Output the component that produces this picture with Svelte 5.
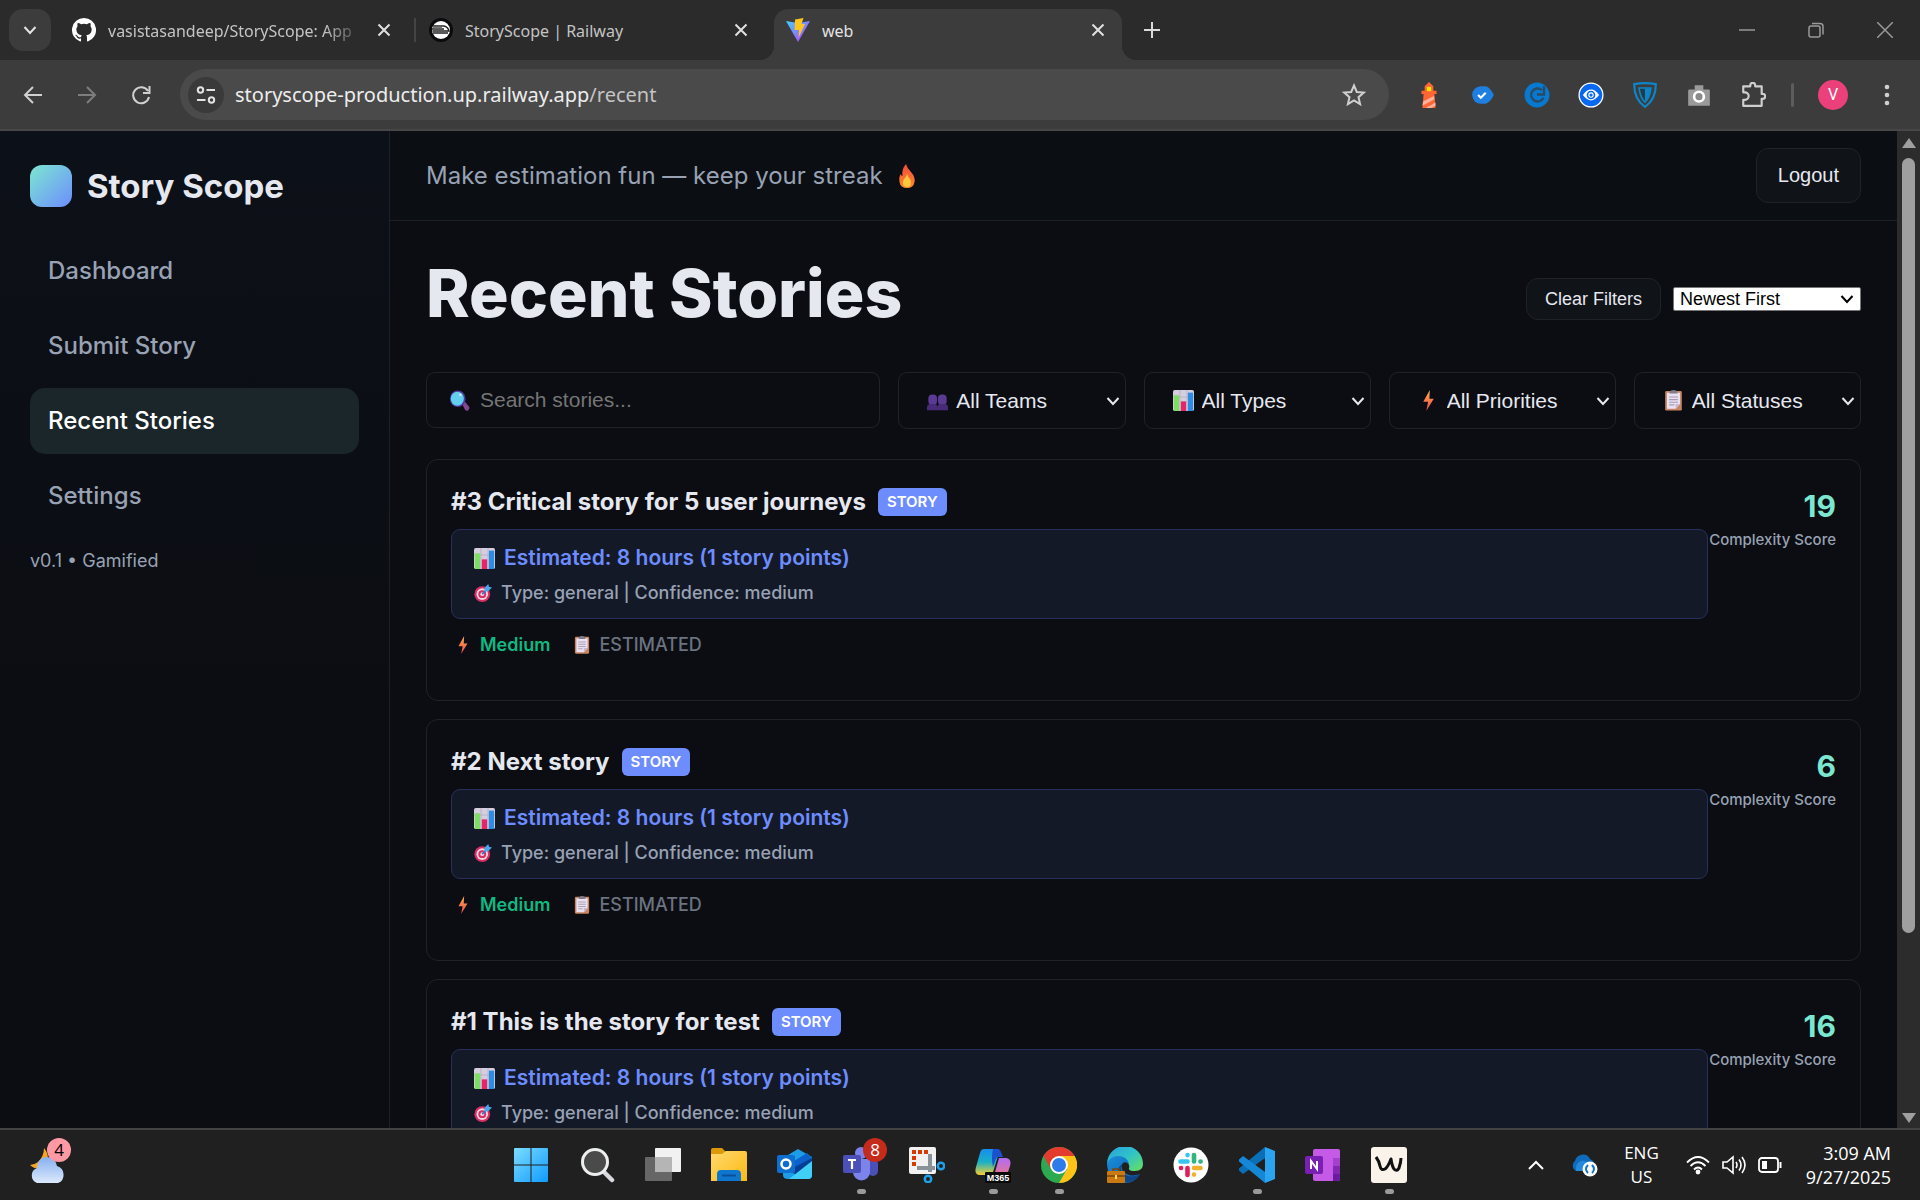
<script>
  const nav = ['Dashboard', 'Submit Story', 'Recent Stories', 'Settings'];
  const filters = [
    { icon: 'people', label: 'All Teams', name: 'Team' },
    { icon: 'chart', label: 'All Types', name: 'Type' },
    { icon: 'bolt', label: 'All Priorities', name: 'Priority' },
    { icon: 'clipboard', label: 'All Statuses', name: 'Status' }
  ];
  const stories = [
    { id: 3, title: 'Critical story for 5 user journeys', score: 19 },
    { id: 2, title: 'Next story', score: 6 },
    { id: 1, title: 'This is the story for test', score: 16 }
  ];
  const extensions = ['lighthouse', 'tag', 'grammar', 'eye', 'shield', 'camera', 'puzzle'];
  const apps = [
    { id: 'start', label: 'Start' },
    { id: 'find', label: 'Search' },
    { id: 'tasks', label: 'Task View' },
    { id: 'folder', label: 'File Explorer' },
    { id: 'outlook', label: 'Outlook' },
    { id: 'teams', label: 'Teams', open: true, badge: '8' },
    { id: 'snip', label: 'Snipping Tool' },
    { id: 'copilot', label: 'Microsoft 365 Copilot', open: true },
    { id: 'chrome', label: 'Chrome', open: true },
    { id: 'edge', label: 'Edge' },
    { id: 'slack', label: 'Slack' },
    { id: 'code', label: 'Visual Studio Code', open: true },
    { id: 'onenote', label: 'OneNote' },
    { id: 'wave', label: 'W', open: true }
  ];
</script>

{#snippet closeIcon()}
  <svg width="14" height="14" viewBox="0 0 14 14" fill="none" stroke="currentColor" stroke-width="2"><path d="M1.500 1.500l11 11M12.500 1.500l-11 11" /></svg>
{/snippet}

{#snippet chevron()}
  <svg class="chev" width="14" height="14" viewBox="0 0 14 14" fill="none" stroke="currentColor" stroke-width="2"><path d="M1.500 4l5.500 6 5.500-6" /></svg>
{/snippet}

{#snippet emoji(name, size)}
  <svg class="emoji" width={size} height={size} viewBox="0 0 24 24" aria-hidden="true">
    {#if name === 'search'}
      <path d="M15 16l3-3 5 6q1 2-1 4t-4-1z" fill="#83478f" />
      <ellipse cx="10" cy="10" rx="9" ry="9.500" fill="#4d3a9e" />
      <ellipse cx="9.500" cy="10" rx="7.500" ry="8" fill="#62cfef" />
      <circle cx="13" cy="5.500" r="1.500" fill="#c9f3ff" />
    {:else if name === 'people'}
      <g fill="#5a3a92"><rect x="1.500" y="5" width="10" height="12" rx="4.500" /><rect x="12.500" y="5" width="10" height="12" rx="4.500" /></g>
      <path d="M0 23v-3q0-4 4-4h5q3 0 3 4 0-4 3-4h5q4 0 4 4v3z" fill="#482b78" />
    {:else if name === 'chart'}
      <rect width="24" height="24" rx="2" fill="#d5cedf" />
      <path d="M8 0v24M16 0v24M0 8h24" stroke="#b7afc5" stroke-width="1" />
      <rect x="1" y="6" width="6" height="18" fill="#7ddf62" />
      <rect x="9" y="13" width="6" height="11" fill="#e52568" />
      <rect x="17" y="3" width="6" height="21" fill="#2c8de3" />
    {:else if name === 'bolt'}
      <path d="M13.500 0L6 13.500h5.500L9.500 24 18 10h-5z" fill="url(#boltFill)" />
    {:else if name === 'clipboard'}
      <rect x="2.500" y="1" width="19" height="22.500" rx="1.500" fill="#c98560" />
      <path d="M4.500 3h15v13l-5 5.500h-10z" fill="#e9e0f2" />
      <path d="M19.500 16l-5 5.500V16z" fill="#c5b7d3" />
      <path d="M7.500 4V2q1-2 4.500-2t4.500 2v2z" fill="#827b8c" />
      <path d="M7 8h10M7 11h10M7 14h10M7 17h6" stroke="#a59ab1" stroke-width="1.200" />
    {:else if name === 'target'}
      <circle cx="11" cy="13.500" r="10.500" fill="#d92e62" />
      <circle cx="11" cy="13.500" r="7.700" fill="#f3d5e4" />
      <circle cx="11" cy="13.500" r="5.200" fill="#d92e62" />
      <circle cx="11" cy="13.500" r="2.500" fill="#f3d5e4" />
      <path d="M11 13.500L19 5" stroke="#2a78c8" stroke-width="2" />
      <path d="M14 5L19 0l1 3.500 4 1-5.500 5.500-4.500-.5z" fill="#4aa8ec" />
    {:else if name === 'fire'}
      <path d="M11 0q1 4 5 8 4.500 5 3.500 10-1 6-7.500 6t-7.500-6q-1-4 1-8 1 2 2 2Q6.500 5 11 0z" fill="url(#fireFill)" />
      <path d="M12 10q1 3 3 5 2 4 0 7-3 2-6 0-3-4 1-8 2-2 2-4z" fill="#ffc83d" />
    {/if}
  </svg>
{/snippet}

<svg class="defs" width="0" height="0" aria-hidden="true">
  <defs>
    <linearGradient id="boltFill" x1="0" y1="0" x2="0" y2="1"><stop offset="0" stop-color="#ffb347" /><stop offset="1" stop-color="#f0424e" /></linearGradient>
    <linearGradient id="fireFill" x1="0" y1="0" x2="0" y2="1"><stop offset="0" stop-color="#f2493a" /><stop offset="1" stop-color="#ff8a2b" /></linearGradient>
    <linearGradient id="vite" x1="0" y1="0" x2="1" y2="1"><stop offset="0" stop-color="#41d1ff" /><stop offset="1" stop-color="#bd34fe" /></linearGradient>
    <linearGradient id="win" x1="0" y1="0" x2="1" y2="1"><stop offset="0" stop-color="#7ddcff" /><stop offset="1" stop-color="#0f9bff" /></linearGradient>
    <linearGradient id="fold" x1="0" y1="0" x2="1" y2="1"><stop offset="0" stop-color="#ffda6e" /><stop offset="1" stop-color="#fbb913" /></linearGradient>
    <linearGradient id="cloud" x1="0" y1="0" x2="0" y2="1"><stop offset="0" stop-color="#86b0ee" /><stop offset="1" stop-color="#dce9fc" /></linearGradient>
    <linearGradient id="copL" x1="0" y1="0" x2="0" y2="1"><stop offset="0" stop-color="#178dee" /><stop offset=".5" stop-color="#1ab0c5" /><stop offset="1" stop-color="#f5cf31" /></linearGradient>
    <linearGradient id="copR" x1="0" y1="0" x2="0" y2="1"><stop offset="0" stop-color="#b06cf5" /><stop offset="1" stop-color="#ff7a6b" /></linearGradient>
    <linearGradient id="edgeTop" x1="0" y1="0" x2="1" y2="1"><stop offset="0" stop-color="#2a9fe0" /><stop offset=".5" stop-color="#2fc3c8" /><stop offset="1" stop-color="#6be05c" /></linearGradient>
    <linearGradient id="edgeMid" x1="0" y1="0" x2="1" y2="1"><stop offset="0" stop-color="#1a8fdc" /><stop offset="1" stop-color="#0c59a4" /></linearGradient>
  </defs>
</svg>

<div class="screen">
  <div class="tabstrip">
    <button class="tabsearch" aria-label="Search tabs">{@render chevron()}</button>
    <div class="tab first">
      <svg width="24" height="24" viewBox="0 0 16 16" fill="#fff"><path d="M8 0a8 8 0 0 0-2.530 15.590c.4.070.550-.170.550-.380v-1.490c-2.230.480-2.700-.950-2.700-.950-.360-.920-.890-1.170-.890-1.170-.730-.5.050-.490.050-.490.800.060 1.230.830 1.230.830.720 1.220 1.870.870 2.330.660.070-.520.280-.870.510-1.070-1.780-.2-3.640-.890-3.640-3.950 0-.870.310-1.590.820-2.150-.080-.2-.360-1.020.080-2.120 0 0 .670-.210 2.200.820a7.600 7.600 0 0 1 4 0c1.530-1.040 2.200-.820 2.200-.820.440 1.100.160 1.920.080 2.120.510.560.820 1.270.820 2.150 0 3.070-1.870 3.750-3.650 3.950.290.250.540.730.540 1.480v2.200c0 .210.150.460.550.380A8 8 0 0 0 8 0z" /></svg>
      <span class="tabname faded">vasistasandeep/StoryScope: App</span>
      <button class="x" aria-label="Close tab">{@render closeIcon()}</button>
    </div>
    <span class="tabsep"></span>
    <div class="tab second">
      <svg width="24" height="24" viewBox="0 0 24 24"><circle cx="12" cy="12" r="12" fill="#0b0b0e" /><circle cx="12" cy="12" r="9" fill="#fff" /><path d="M4 8h11q4 1 5 5H3.500M3 11h12M4 15h15" stroke="#222" stroke-width="1.500" fill="none" /><path d="M4 9.500h9" stroke="#777" stroke-width="1.500" /></svg>
      <span class="tabname">StoryScope | Railway</span>
      <button class="x" aria-label="Close tab">{@render closeIcon()}</button>
    </div>
    <div class="tab active">
      <svg width="24" height="24" viewBox="0 0 24 24"><path d="M0 3l12 2 12-2-12 21z" fill="url(#vite)" /><path d="M9 1.500L17.500 0 15.500 6H19l-6.500 14 .5-8H8.500z" fill="#ffc51f" /></svg>
      <span class="tabname">web</span>
      <button class="x" aria-label="Close tab">{@render closeIcon()}</button>
    </div>
    <button class="newtab" aria-label="New tab"><svg width="16" height="16" viewBox="0 0 16 16" stroke="#dadada" stroke-width="2"><path d="M8 0v16M0 8h16" /></svg></button>
    <div class="winbtns">
      <button aria-label="Minimize"><svg width="16" height="16" viewBox="0 0 16 16" stroke="#999" stroke-width="1.500"><path d="M0 8h16" /></svg></button>
      <button aria-label="Restore"><svg width="16" height="16" viewBox="0 0 16 16" fill="none" stroke="#999" stroke-width="1.500"><rect x="1" y="4" width="11" height="11" rx="2" /><path d="M4 1.500h8q3 0 3 3v8" /></svg></button>
      <button aria-label="Close"><svg width="16" height="16" viewBox="0 0 16 16" stroke="#999" stroke-width="1.500"><path d="M0 0l16 16M16 0L0 16" /></svg></button>
    </div>
  </div>

  <div class="toolbar">
    <div class="navbtns">
      <button aria-label="Back"><svg width="20" height="20" viewBox="0 0 20 20" fill="none" stroke="#d0d0d0" stroke-width="2"><path d="M19 10H2M10 2l-8 8 8 8" /></svg></button>
      <button aria-label="Forward"><svg width="20" height="20" viewBox="0 0 20 20" fill="none" stroke="#7d7d7d" stroke-width="2"><path d="M1 10h17M10 2l8 8-8 8" /></svg></button>
      <button aria-label="Reload"><svg width="20" height="20" viewBox="0 0 20 20" fill="none" stroke="#d0d0d0" stroke-width="2"><path d="M17 6A8 8 0 1 0 18 12M18.500 1v7H12" /></svg></button>
    </div>
    <div class="omnibox">
      <button class="site" aria-label="Site information"><svg width="20" height="20" viewBox="0 0 20 20" fill="none" stroke="#e3e3e3" stroke-width="2"><circle cx="4.500" cy="5" r="2.700" /><path d="M10.500 5H19M1 15h8.500" /><circle cx="15.500" cy="15" r="2.700" /></svg></button>
      <a class="url" href="#recent">storyscope-production.up.railway.app<span>/recent</span></a>
      <button class="star" aria-label="Bookmark"><svg width="24" height="24" viewBox="0 0 24 24" fill="none" stroke="#d0d0d0" stroke-width="2"><path d="M12 2.500l2.800 6.500 7 .6-5.300 4.600 1.600 6.900-6.100-3.700-6.100 3.700 1.600-6.900L2.200 9.600l7-.6z" /></svg></button>
    </div>
    <div class="exts">
      {#each extensions as e}
        <button aria-label={e}>
          <svg width="26" height="26" viewBox="0 0 24 24">
            {#if e === 'lighthouse'}
              <path d="M8 8V4l4-4 4 4v4h3v3h-2l1 13H6l1-13H5V8z" fill="#ff6633" /><rect x="10" y="4.500" width="4" height="4" fill="#ffe600" /><path d="M6.500 18l10-5 .5 3-11 6zM9 24l9-5v3l-4 2z" fill="#ffb199" />
            {:else if e === 'tag'}
              <path d="M10 4h4q4 0 8 8-4 8-8 8h-4a8 8 0 0 1 0-16z" fill="#1e7fe0" /><path d="M7.500 12l2.500 2.500 4.500-4.500" fill="none" stroke="#fff" stroke-width="2" />
            {:else if e === 'grammar'}
              <circle cx="12" cy="12" r="11.500" fill="#0879d1" /><path d="M16.500 7.500a6 6 0 1 0 1.500 7M18.500 4v7.500H12" fill="none" stroke="#2b4a63" stroke-width="2.200" />
            {:else if e === 'eye'}
              <circle cx="12" cy="12" r="11" fill="#0868ef" stroke="#fff" stroke-width="1.200" /><path d="M4.500 12q7.500-10 15 0-7.500 10-15 0z" fill="#fff" /><circle cx="12" cy="12" r="4" fill="#0868ef" /><circle cx="12" cy="12" r="2" fill="none" stroke="#fff" />
            {:else if e === 'shield'}
              <path d="M2 2q10-2 20 0 0 14-10 21Q2 16 2 2z" fill="none" stroke="#0c86c9" stroke-width="2" /><path d="M6.500 5.500h11q-1 9-5.500 13-4.500-4-5.500-13z" fill="#213b49" stroke="#0c86c9" stroke-width="1.500" /><path d="M12 6h5q-1 8-5 12z" fill="#0c86c9" />
            {:else if e === 'camera'}
              <path d="M3 7h5V3h8v4h5q1 0 1 1v14H2V8q0-1 1-1z" fill="#9a9a9a" /><circle cx="12" cy="13.500" r="4.500" fill="#8a8a8a" stroke="#fff" stroke-width="2.500" />
            {:else}
              <path d="M3 4h6.500V3a2.200 2.200 0 0 1 4.500 0v1H20v7h1a2.200 2.200 0 0 1 0 4.500h-1V22H3v-5.500h1.500a3 3 0 0 0 0-7H3z" fill="none" stroke="#cfcfcf" stroke-width="2" stroke-linejoin="round" />
            {/if}
          </svg>
        </button>
      {/each}
    </div>
    <span class="toolsep"></span>
    <button class="avatar" aria-label="Profile">V</button>
    <button class="dots" aria-label="Menu"><svg width="6" height="22" viewBox="0 0 6 22" fill="#d0d0d0"><circle cx="3" cy="3" r="2.300" /><circle cx="3" cy="11" r="2.300" /><circle cx="3" cy="19" r="2.300" /></svg></button>
  </div>

  <div class="page">
    <aside>
      <div class="brand"><span class="logo"></span><strong>Story Scope</strong></div>
      <nav>
        {#each nav as item}
          <a href="#{item}" class:current={item === 'Recent Stories'}>{item}</a>
        {/each}
      </nav>
      <small>v0.1 • Gamified</small>
    </aside>

    <main>
      <header>
        <p>Make estimation fun — keep your streak {@render emoji('fire', 24)}</p>
        <button class="logout">Logout</button>
      </header>
      <section>
        <div class="heading">
          <h1>Recent Stories</h1>
          <div class="actions">
            <button class="clear">Clear Filters</button>
            <div class="sort">
              <select aria-label="Sort order"><option>Newest First</option></select>
              {@render chevron()}
            </div>
          </div>
        </div>

        <div class="filters">
          <label class="searchbox">
            {@render emoji('search', 21)}
            <input type="text" placeholder="Search stories..." aria-label="Search stories" />
          </label>
          {#each filters as f}
            <label class="filter">
              {@render emoji(f.icon, 21)}
              <select aria-label={f.name}><option>{f.label}</option></select>
              {@render chevron()}
            </label>
          {/each}
        </div>

        <div class="cards">
          {#each stories as s}
            <article>
              <div class="info">
                <div class="title"><h2>#{s.id} {s.title}</h2><span class="badge">STORY</span></div>
                <div class="estimate">
                  <div class="est">{@render emoji('chart', 21)}Estimated: 8 hours (1 story points)</div>
                  <div class="kind">{@render emoji('target', 18)}Type: general | Confidence: medium</div>
                </div>
                <div class="meta">
                  <span class="priority">{@render emoji('bolt', 18)}Medium</span>
                  <span class="status">{@render emoji('clipboard', 18)}ESTIMATED</span>
                </div>
              </div>
              <div class="score"><b>{s.score}</b><span>Complexity Score</span></div>
            </article>
          {/each}
        </div>
      </section>
    </main>

    <div class="scrollbar">
      <svg width="14" height="10" viewBox="0 0 14 10" fill="#9f9f9f"><path d="M7 0l7 10H0z" /></svg>
      <div class="track"><div class="thumb"></div></div>
      <svg width="14" height="10" viewBox="0 0 14 10" fill="#9f9f9f"><path d="M7 10l7-10H0z" /></svg>
    </div>
  </div>

  <footer>
    <div class="side left">
      <button class="weather" aria-label="Weather">
        <svg width="38" height="38" viewBox="0 0 38 38"><path d="M15 2q8 10-1 20-8 2-13-3 4 0 8-3 6-6 6-14z" fill="#f5a623" /><path d="M8 37a8 8 0 0 1 0-15 10 10 0 0 1 20-2 9 9 0 0 1 1 17z" fill="url(#cloud)" /></svg>
        <span class="count">4</span>
      </button>
    </div>
    <div class="apps">
      {#each apps as a}
        <button class:open={a.open} aria-label={a.label}>
          <svg width="36" height="36" viewBox="0 0 36 36">
            {#if a.id === 'start'}
              <path d="M1 2q0-1 1-1h15.500v16.500H1zM18.500 1H34q1 0 1 1v15.500H18.500zM1 18.500h16.500V35H2q-1 0-1-1zM18.500 18.500H35V34q0 1-1 1H18.500z" fill="url(#win)" />
            {:else if a.id === 'find'}
              <path d="M25 25l8 8" stroke="#d8dade" stroke-width="4.500" stroke-linecap="round" /><circle cx="16" cy="15" r="12.500" fill="#4a4a4a" stroke="#eceef0" stroke-width="3" />
            {:else if a.id === 'tasks'}
              <rect x="10" y="1" width="26" height="24" rx="1" fill="#f1f1f1" /><rect x="0" y="10" width="27" height="24" rx="1" fill="#666" /><path d="M10 10h17v15H10z" fill="#b5b5b5" />
            {:else if a.id === 'folder'}
              <path d="M0 3q0-2 2-2h9l4 4v5H0z" fill="#dc9a0a" /><path d="M0 7h11l4-3h19q2 0 2 2v28H0z" fill="url(#fold)" /><path d="M6 34V27q0-4 4-4h16q4 0 4 4v7z" fill="#0f76d0" /><path d="M11 28.500h14" stroke="#0b4f96" stroke-width="2" />
            {:else if a.id === 'outlook'}
              <path d="M6 11L21 2l14 8v18q0 4-4 4H11q-5 0-5-4z" fill="#1b9de8" /><path d="M14 16L30 6l5 5-16 12z" fill="#0b62cc" /><path d="M12 23l23-12v7L19 28z" fill="#053f95" /><path d="M35 14v14q0 4-4 4H12z" fill="#3fd0f8" /><rect y="8" width="18" height="18" rx="2" fill="#0f6fd0" /><circle cx="9" cy="17" r="4.500" fill="none" stroke="#fff" stroke-width="2.500" />
            {:else if a.id === 'teams'}
              <circle cx="18" cy="6" r="6" fill="#7b83eb" /><rect x="25" y="12" width="10" height="17" rx="5" fill="#4a50b8" /><path d="M10 12h17v13a8.500 8.500 0 0 1-17 0z" fill="#7c84ec" /><rect y="8" width="18" height="18" rx="2" fill="#4b50b9" /><path d="M5 13h8M9 13v9" stroke="#fff" stroke-width="2.200" />
            {:else if a.id === 'snip'}
              <rect width="27" height="27" rx="2" fill="#f1f1f1" /><path d="M3 5h16M5 9v10" stroke="#d83b01" stroke-width="4" stroke-dasharray="4 2" /><path d="M21 7v18M8 21h18" stroke="#8a9299" stroke-width="4" /><circle cx="32" cy="19" r="3.200" fill="none" stroke="#1fa0e8" stroke-width="2.500" /><circle cx="19" cy="32" r="3.200" fill="none" stroke="#1fa0e8" stroke-width="2.500" />
            {:else if a.id === 'copilot'}
              <path d="M9 2h13q3 0 2 4l-6 19q-1 3-4 3H4q-5-1-3-8L5 6q1-4 4-4z" fill="url(#copL)" /><path d="M18 2h4q3 0 4 3l2 5h-4q-3 0-4 4l-2 6q-2-10 0-18z" fill="#1b50cf" /><path d="M24 11h7q6 1 4 8l-4 12q-1 4-5 4H14q4-1 5-6z" fill="url(#copR)" /><rect x="10" y="25" width="26" height="11" rx="1" fill="#090909" />
              <text x="23" y="34" font-size="9" font-weight="700" text-anchor="middle" fill="#fff">M365</text>
            {:else if a.id === 'chrome'}
              <circle cx="18" cy="18" r="18" fill="#2da94f" /><path d="M2.400 9A18 18 0 0 1 33.600 9H18L10.200 22.500z" fill="#e33b2e" /><path d="M33.600 9A18 18 0 0 1 18 36l7.800-13.500L18 9z" fill="#fdc417" /><circle cx="18" cy="18" r="9" fill="#fff" /><circle cx="18" cy="18" r="7" fill="#2e7bea" />
            {:else if a.id === 'edge'}
              <path d="M0 17A18 18 0 0 1 36 17q0 7-8 7-7 0-6-3 1-2-1-5-4-7-12-5Q3 12 0 17z" fill="url(#edgeTop)" />
              <path d="M0 17Q3 9 11 9q9 0 11 8-4-3-6-1-3 3 0 8 6 7 17 3-5 9-15 9Q1 35 0 17z" fill="url(#edgeMid)" />
              <path d="M15 17q-3 5 2 10 7 5 16 0-5 8-13 8-9-3-9-10 0-5 4-8z" fill="#0d4585" />
              <rect y="24" width="18" height="12" rx="1" fill="#c97a12" /><path d="M6 24v-2h6v2M0 29h18" fill="none" stroke="#7b4505" stroke-width="1.500" /><rect x="8" y="28" width="2" height="4" fill="#ffd36a" />
            {:else if a.id === 'slack'}
              <circle cx="18" cy="18" r="17.500" fill="#fff" />
              <g stroke-width="4.600" stroke-linecap="round"><path d="M7.500 14.500h7M14.500 8v.1" stroke="#36c5f0" /><path d="M21 8v6.500M27.500 14.500h.1" stroke="#2eb67d" /><path d="M27.500 21h-6.500M21 27.500v.1" stroke="#ecb22e" /><path d="M14.500 28v-7M8 21h.1" stroke="#e01e5a" /></g>
            {:else if a.id === 'code'}
              <path d="M26 0l10 4v28l-10 4z" fill="#2aa3f0" />
              <path d="M26 0v11L4 27l-4-3.500v-2z" fill="#0b6fb8" />
              <path d="M26 36V25L4 9l-4 3.500v2z" fill="#1488d6" />
            {:else if a.id === 'onenote'}
              <rect x="8" y="2" width="27" height="32" rx="2" fill="#c55ae6" /><path d="M28 11h7v8h-7z" fill="#a53fd0" /><path d="M28 19h7v8h-7z" fill="#8427b5" /><path d="M28 27h7v5q0 2-2 2h-5z" fill="#6a1b9f" /><rect y="9" width="18" height="18" rx="2" fill="#7a1fb4" /><path d="M6 22v-8l6 8v-8" fill="none" stroke="#fff" stroke-width="2" />
            {:else}
              <rect width="36" height="36" rx="3" fill="#faf3ea" /><path d="M5 10q3 4 4 9 1 5 5 3 3-2 6-10 1 7 3 10 3 3 5-1 2-6 2-10" fill="none" stroke="#111" stroke-width="3" stroke-linejoin="round" />
            {/if}
          </svg>
          {#if a.badge}<span class="notif">{a.badge}</span>{/if}
        </button>
      {/each}
    </div>
    <div class="side right">
      <button aria-label="Show hidden icons"><svg width="16" height="10" viewBox="0 0 16 10" fill="none" stroke="#fff" stroke-width="2"><path d="M1 9l7-7 7 7" /></svg></button>
      <button aria-label="OneDrive"><svg width="26" height="24" viewBox="0 0 26 24"><path d="M4 18a6 6 0 0 1-1-10 8 8 0 0 1 15-2q5 2 4 7v5z" fill="#0f6cbd" /><path d="M9 8q8-2 9 10H4q-1-8 5-10z" fill="#2489dc" /><circle cx="18" cy="16" r="7.500" fill="#fff" /><path d="M16 20q-4-4 0-8M20 12q4 4 0 8" fill="none" stroke="#1473c8" stroke-width="2" /></svg></button>
      <div class="lang">ENG<br />US</div>
      <div class="sys">
        <svg width="24" height="20" viewBox="0 0 24 20" fill="none" stroke="#fff" stroke-width="1.800"><path d="M1 7.500q11-11 22 0M4.500 11q7.500-7.500 15 0M8 14.500q4-4 8 0" /><circle cx="12" cy="17" r="1.500" fill="#fff" /></svg>
        <svg width="24" height="20" viewBox="0 0 24 20" fill="none" stroke="#fff" stroke-width="1.600"><path d="M1 7h4l6-5v16l-6-5H1zM14 7q2 3 0 6M17 4.500q4 5.500 0 11M20 2q6 8 0 16" /></svg>
        <svg width="24" height="16" viewBox="0 0 24 16" fill="none" stroke="#fff" stroke-width="1.800"><rect x="1" y="1" width="19" height="14" rx="3" /><rect x="4" y="4" width="5" height="8" fill="#fff" stroke="none" /><path d="M22.500 5v6" stroke-width="2" /></svg>
      </div>
      <time>3:09 AM<br />9/27/2025</time>
    </div>
  </footer>
</div>

<style>
  :global(body) { margin: 0; background: #0b0d12; }
  .screen, .screen * { box-sizing: border-box; }
  .defs { position: absolute; }
  .screen {
    height: 100vh; display: flex; flex-direction: column; overflow: hidden;
    font-family: Inter, sans-serif; color: #e6e8f0; background: #0b0d12;
  }
  button { font: inherit; color: inherit; background: none; border: 0; padding: 0; display: flex; align-items: center; justify-content: center; }
  a { color: inherit; text-decoration: none; }
  svg { flex: none; display: block; }

  .tabstrip { flex: none; height: 60px; background: #2b2b2b; display: flex; align-items: center; padding-left: 9px; font-family: "Noto Sans", sans-serif; font-size: 16px; color: #c4c4c4; }
  .tabsearch { width: 42px; height: 42px; border-radius: 14px; background: #3c3c3c; color: #e3e3e3; }
  .tab { display: flex; align-items: center; gap: 12px; }
  .tab.first { width: 342px; margin-left: 21px; }
  .tab.second { width: 319px; margin-left: 13px; }
  .tab.active { position: relative; width: 348px; height: 51px; align-self: flex-end; margin-left: 26px; padding: 0 17px 9px 12px; background: #3c3c3c; border-radius: 14px 14px 0 0; color: #e3e3e3; }
  .tab.active::before, .tab.active::after { content: ""; position: absolute; bottom: 0; width: 14px; height: 14px; }
  .tab.active::before { right: 100%; background: radial-gradient(circle at 0 0, #2b2b2b 14px, #3c3c3c 14px); }
  .tab.active::after { left: 100%; background: radial-gradient(circle at 100% 0, #2b2b2b 14px, #3c3c3c 14px); }
  .tabname { flex: 1; min-width: 0; overflow: hidden; white-space: nowrap; line-height: 26px; padding-top: 2px; }
  .faded { -webkit-mask-image: linear-gradient(90deg, #000 84%, transparent); mask-image: linear-gradient(90deg, #000 84%, transparent); }
  .tab.first .x { margin-right: 23px; }
  .x { color: #e0e0e0; }
  .tabsep { width: 2px; height: 24px; background: #444; }
  .newtab { margin-left: 22px; }
  .winbtns { margin-left: auto; display: flex; gap: 53px; padding-right: 27px; }

  .toolbar { flex: none; height: 71px; background: #3c3c3c; border-bottom: 2px solid #474747; display: flex; align-items: center; padding: 0 30px 0 23px; }
  .navbtns { display: flex; gap: 34px; }
  .omnibox { flex: 1; height: 51px; margin-left: 29px; border-radius: 26px; background: #4a4a4a; display: flex; align-items: center; padding: 0 23px 0 8px; }
  .site { width: 36px; height: 36px; border-radius: 50%; background: #3a3a3a; }
  .url { flex: 1; padding-left: 11px; font: 20px/28px "Noto Sans", sans-serif; color: #ededed; }
  .url span { color: #c4c4c4; }
  .exts { display: flex; gap: 28px; margin-left: 27px; }
  .toolsep { width: 3px; height: 24px; margin: 0 24px 0 25px; background: #5c5c5c; border-radius: 2px; }
  .avatar { width: 30px; height: 30px; border-radius: 50%; background: #ec407a; color: #fff; font: 16px Roboto, sans-serif; }
  .dots { margin-left: 36px; }

  .page { flex: 1; min-height: 0; display: flex; }
  aside { flex: none; width: 390px; padding: 34px 30px; border-right: 1px solid #1d2027; background: linear-gradient(#0c1018, #0b0d12 60%); }
  .brand { display: flex; align-items: center; gap: 15px; }
  .logo { width: 42px; height: 42px; border-radius: 12px; background: linear-gradient(135deg, #7ce7d0, #6d8dff); }
  .brand strong { font-size: 33px; line-height: 42px; font-weight: 700; padding-bottom: 2px; margin-bottom: -2px; }
  nav { display: flex; flex-direction: column; gap: 9px; margin-top: 31px; }
  nav a { height: 66px; padding: 0 18px 2px; border-radius: 15px; display: flex; align-items: center; font-size: 24px; font-weight: 500; color: #98a2b3; }
  nav a.current { background: #1a2629; color: #fff; }
  small { display: block; margin-top: 18px; font-size: 18px; line-height: 28px; color: #98a2b3; }

  main { flex: 1; min-width: 0; display: flex; flex-direction: column; overflow: hidden; }
  header { flex: none; height: 90px; padding: 0 36px; display: flex; align-items: center; justify-content: space-between; background: #0b0e13; border-bottom: 1px solid #1c2027; }
  header p { margin: 0; font-size: 24px; line-height: 36px; color: #98a2b3; display: flex; align-items: center; gap: 12px; }
  .logout { height: 55px; padding: 0 21px; border: 1px solid #1f2329; border-radius: 12px; background: #101318; font: 20px "Liberation Sans", sans-serif; }
  section { padding: 0 36px; }
  .heading { display: flex; align-items: center; justify-content: space-between; padding-top: 28px; }
  h1 { margin: 0; font-size: 66px; line-height: 88px; font-weight: 800; }
  .actions { display: flex; align-items: center; gap: 12px; padding-top: 12px; }
  .clear { height: 42px; padding: 0 18px; border: 1px solid #1f2329; border-radius: 12px; background: #101318; font: 18px "Liberation Sans", sans-serif; }
  select { appearance: none; margin: 0; border: 0; background: transparent; color: inherit; outline: 0; }
  .sort { width: 188px; height: 24px; padding: 0 6px; display: flex; align-items: center; background: #fff; color: #000; border: 1px solid #767676; border-radius: 2px; }
  .sort select { flex: 1; min-width: 0; padding: 0; font: 18px/20px "Liberation Sans", sans-serif; }
  .filters { display: grid; grid-template-columns: 2fr 1fr 1fr 1fr 1fr; gap: 18px; margin-top: 35px; align-items: start; }
  .searchbox, .filter { height: 57px; border: 1px solid #1f2228; border-radius: 9px; display: flex; align-items: center; min-width: 0; }
  .searchbox { height: 56px; padding: 0 22px; gap: 10px; }
  .searchbox input { flex: 1; min-width: 0; padding: 0; border: 0; outline: 0; background: transparent; color: #e6e8f0; font: 21px "Liberation Sans", sans-serif; }
  .searchbox input::placeholder { color: #757575; opacity: 1; }
  .filter { padding: 0 5px 0 28px; }
  .filter select { flex: 1; min-width: 0; padding: 0 0 0 8px; font: 21px/24px "Liberation Sans", sans-serif; }

  .cards { display: flex; flex-direction: column; gap: 18px; margin-top: 30px; }
  article { min-height: 242px; padding: 24px; border: 1px solid #1f2228; border-radius: 12px; display: flex; }
  .info { flex: 1; min-width: 0; }
  .title { display: flex; align-items: center; gap: 12px; height: 36px; }
  h2 { margin: 0; font-size: 24px; line-height: 36px; font-weight: 700; }
  .badge { padding: 0 9px; border-radius: 6px; background: #6d8dff; color: #fff; font-size: 15px; line-height: 28px; font-weight: 600; }
  .estimate { margin-top: 9px; padding: 11px 22px 10px; border: 1px solid #26305a; border-radius: 9px; background: #141928; }
  .est, .kind, .meta span { display: flex; align-items: center; }
  .est { gap: 9px; font-size: 21px; line-height: 34px; font-weight: 600; color: #6d8dff; }
  .kind { gap: 9px; margin-top: 3px; font-size: 18px; line-height: 30px; color: #98a2b3; font-weight: 500; }
  .meta { display: flex; gap: 23px; margin-top: 12px; padding-left: 3px; font-size: 18px; line-height: 28px; }
  .meta span { gap: 8px; }
  .priority { color: #10b981; font-weight: 600; }
  .status { color: #6b7280; font-weight: 500; }
  .score { flex: none; min-width: 128px; text-align: right; padding-top: 3px; }
  .score b { display: block; font-size: 30px; line-height: 38px; font-weight: 700; color: #7ce7d0; }
  .score span { display: block; font-size: 15px; line-height: 30px; font-weight: 500; color: #98a2b3; white-space: nowrap; }

  .scrollbar { flex: none; width: 23px; background: #2c2c2c; display: flex; flex-direction: column; align-items: center; padding: 7px 0 5px; }
  .track { flex: 1; width: 13px; padding: 10px 0; }
  .thumb { height: 82%; background: #9f9f9f; border-radius: 7px; }

  footer { flex: none; height: 72px; background: #202020; border-top: 2px solid #424242; display: grid; grid-template-columns: 1fr auto 1fr; align-items: center; color: #fff; font: 17px/24px "Open Sans", sans-serif; }
  .side { display: flex; align-items: center; }
  .weather { position: relative; margin-left: 29px; }
  .count, .notif { position: absolute; border-radius: 50%; width: 24px; height: 24px; display: flex; align-items: center; justify-content: center; }
  .count { left: 18px; top: -8px; background: #ff99a4; color: #000; }
  .notif { right: -8px; top: -9px; background: #c42b1c; color: #fff; }
  .apps { display: flex; gap: 30px; }
  .apps button { position: relative; width: 36px; height: 36px; }
  .apps text { font-family: "Liberation Sans", sans-serif; }
  .open::after { content: ""; position: absolute; top: 42px; left: 14px; width: 9px; height: 5px; border-radius: 3px; background: #9a9a9a; }
  .right { justify-content: flex-end; padding-right: 29px; }
  .right button + button { margin-left: 28px; }
  .lang { margin-left: 26px; text-align: center; }
  .sys { display: flex; align-items: center; gap: 12px; margin-left: 27px; }
  time { margin-left: 24px; text-align: right; font-size: 18px; }
</style>
